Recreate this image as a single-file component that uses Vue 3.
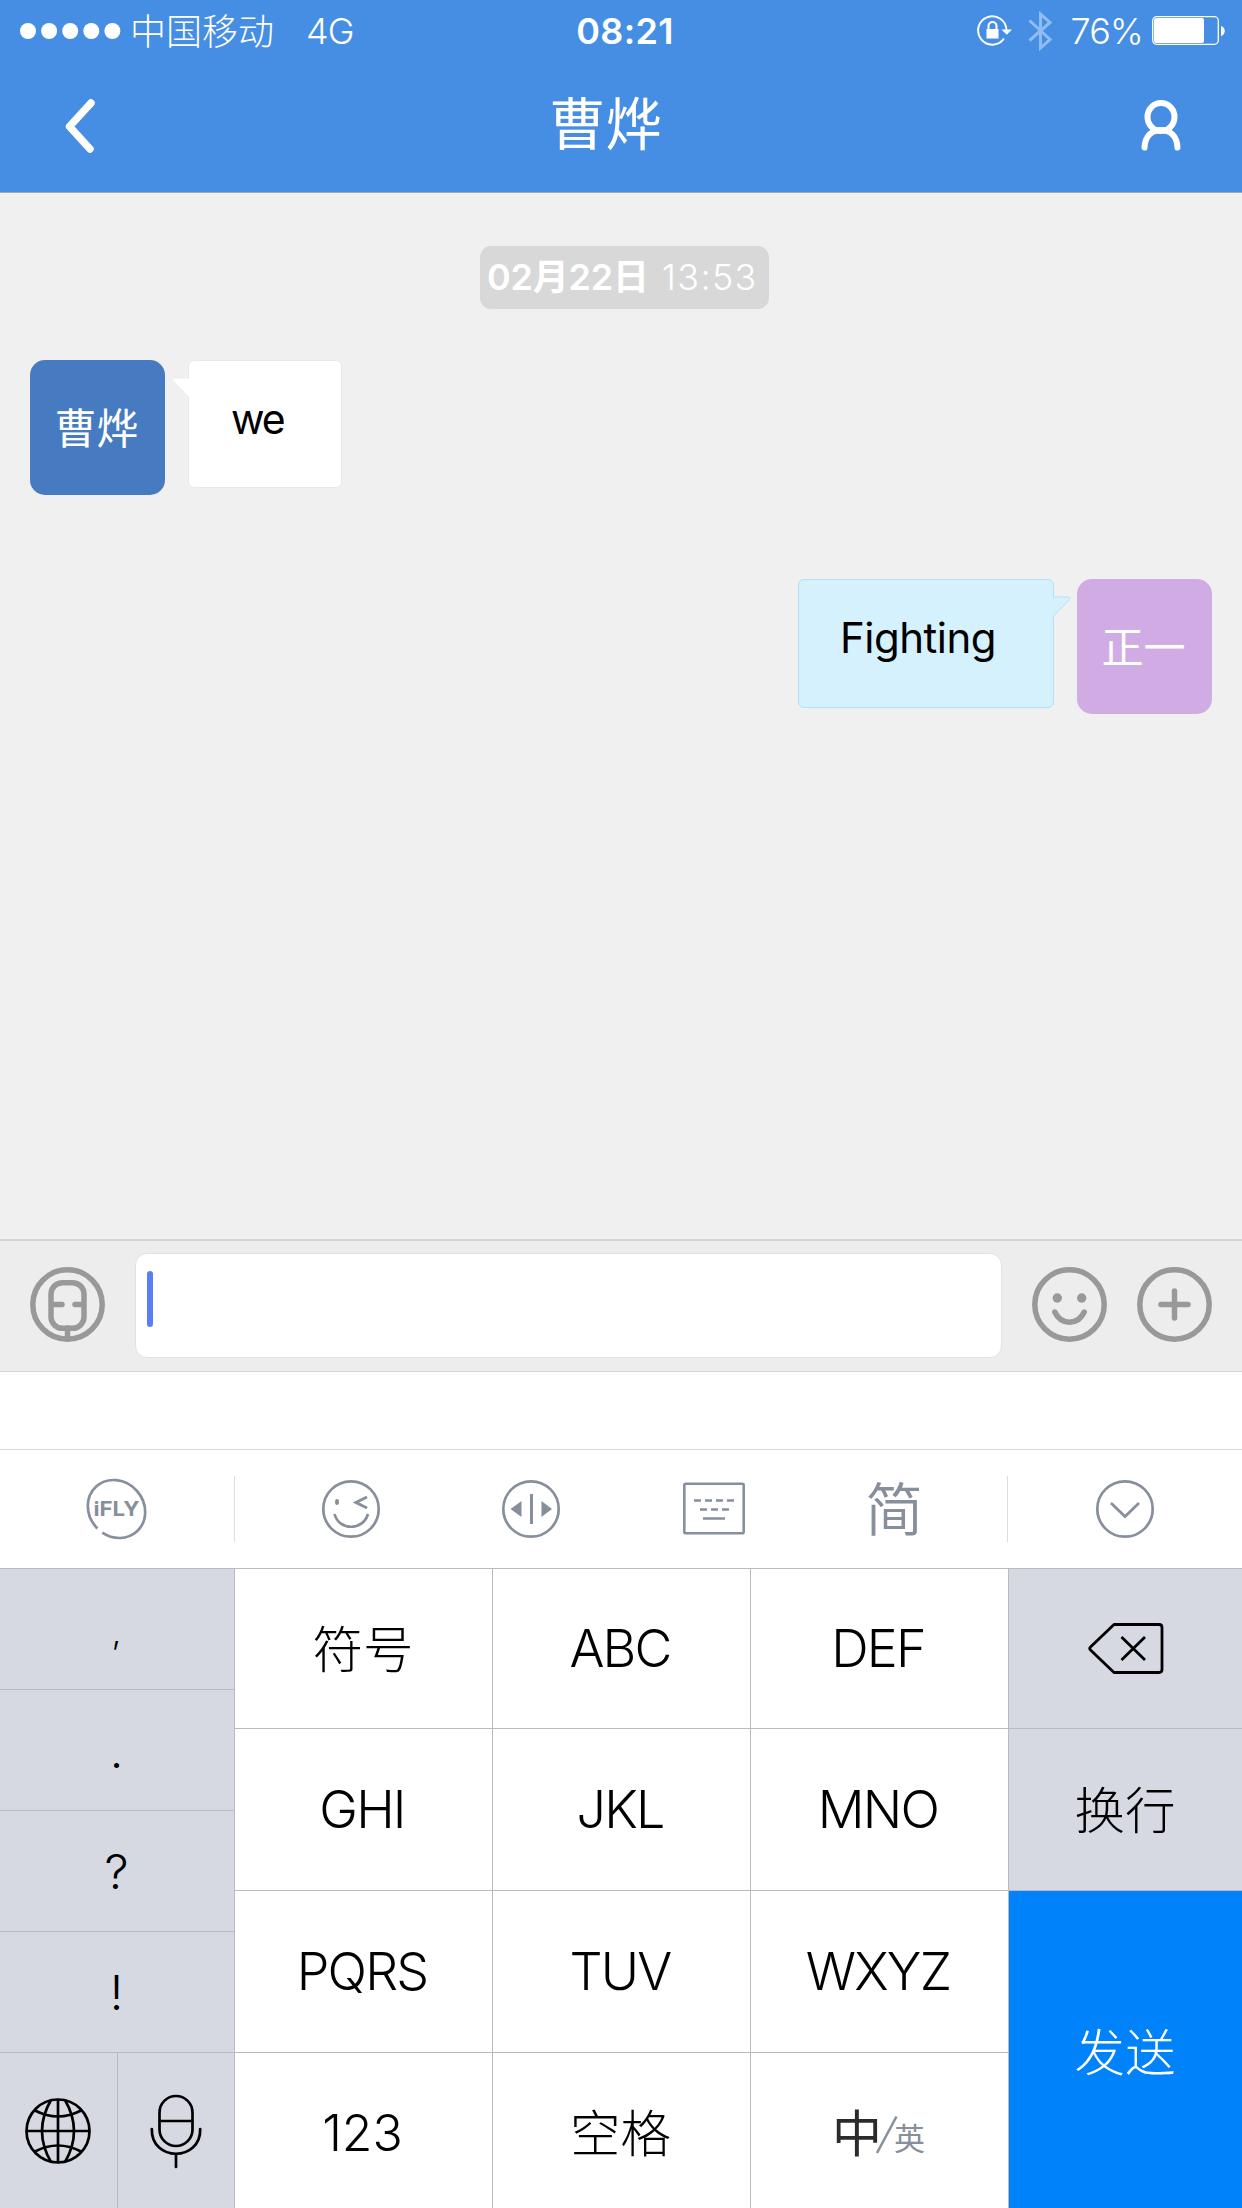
<script setup>
const punctuation = [',', '.', '?', '!']
const keys = ['符号', 'ABC', 'DEF', 'GHI', 'JKL', 'MNO', 'PQRS', 'TUV', 'WXYZ', '123', '空格']
const isLatin = (k) => /^[A-Z]+$/.test(k)
const isHan = (k) => /^[\u4e00-\u9fff]+$/.test(k)
</script>

<template>
  <div class="screen">
    <header class="top">
      <div class="status">
        <div class="carrier">
          <svg class="dots" width="101" height="16" viewBox="0 0 101 16" fill="#fff">
            <circle v-for="n in 5" :key="n" :cx="8 + (n - 1) * 21.1" cy="8" r="8" />
          </svg>
          <span class="operator">中国移动</span>
          <span class="network">4G</span>
        </div>
        <span class="clock">08:21</span>
        <div class="indicators">
          <svg width="36" height="32" viewBox="0 0 36 32" fill="none" stroke="#fff" stroke-width="2">
            <path d="M27 23.500A14.200 14.200 0 1 1 29.500 15" />
            <path d="M24.500 14.500H35L29.800 19.800Z" fill="#fff" stroke="none" />
            <rect x="9.500" y="14" width="12" height="9.500" fill="#fff" stroke="none" />
            <path d="M11.500 15v-4a4 4 0 0 1 8 0V15" />
          </svg>
          <svg class="bluetooth" width="24" height="42" viewBox="0 0 24 42" fill="none" stroke="#8fbdf1" stroke-width="3">
            <path d="M1.500 10.500L22 29.500L12.500 38V4L22 12.500L1.500 30.500" />
          </svg>
          <span class="percent">76%</span>
          <svg class="battery" width="74" height="30" viewBox="0 0 74 30">
            <rect x="0.700" y="0.700" width="65.600" height="27.600" rx="4" fill="none" stroke="#fff" stroke-width="1.300" />
            <rect x="2" y="2" width="50" height="25" rx="2" fill="#fff" />
            <path d="M69 10c5 1.500 5 8.500 0 10z" fill="#fff" />
          </svg>
        </div>
      </div>
      <nav class="nav">
        <svg class="back" width="32" height="56" viewBox="0 0 32 56" fill="none" stroke="#fff" stroke-width="7.500" stroke-linecap="round" stroke-linejoin="round">
          <path d="M26 5L4.500 28.500L25 51" />
        </svg>
        <h1>曹烨</h1>
        <svg class="person" width="42" height="52" viewBox="0 0 42 52" fill="none" stroke="#fff" stroke-width="6" stroke-linecap="round">
          <ellipse cx="21" cy="17" rx="13.500" ry="14" />
          <path d="M4.500 47.500C5 36 12 30 21 30S37 36 37.500 47.500" />
        </svg>
      </nav>
    </header>

    <main class="chat">
      <div class="date"><b>02月22日</b><span>13:53</span></div>
      <div class="message incoming">
        <div class="avatar">曹烨</div>
        <div class="bubble">
          <svg class="tail" width="19" height="22" viewBox="0 0 19 22">
            <path d="M19 1H2.500Q0.500 1.500 1.500 3.500L18 20.500H19Z" fill="#fff" />
            <path d="M18 1H2.500Q0.500 1.500 1.500 3.500L18 20.500" fill="none" stroke="#e8e8e8" stroke-width="0.800" />
          </svg>
          we
        </div>
      </div>
      <div class="message outgoing">
        <div class="bubble">
          <svg class="tail" width="19" height="22" viewBox="0 0 19 22">
            <path d="M0 1H16.500Q18.500 1.500 17.500 3.500L1 20.500H0Z" fill="#d6f1fe" />
            <path d="M1 1H16.500Q18.500 1.500 17.500 3.500L1 20.500" fill="none" stroke="#b5dff7" />
          </svg>
          Fighting
        </div>
        <div class="avatar">正一</div>
      </div>
    </main>

    <section class="composer">
      <svg width="75" height="75" viewBox="0 0 75 75" fill="none" stroke="#999" stroke-width="5.500" stroke-linecap="round">
        <circle cx="37.500" cy="37.500" r="34.700" />
        <rect x="21" y="15.700" width="33" height="45.600" rx="11.500" />
        <path d="M22 37.500H32M53 37.500H45M37.500 61V71" />
      </svg>
      <div class="field"><i class="caret"></i></div>
      <svg width="75" height="75" viewBox="0 0 75 75" fill="none" stroke="#999" stroke-width="5.500">
        <circle cx="37.500" cy="37.500" r="34.700" />
        <circle cx="25.300" cy="31" r="4.700" fill="#999" stroke="none" />
        <circle cx="49.700" cy="31" r="4.700" fill="#999" stroke="none" />
        <path d="M22.800 45C29 58.500 46 58.500 52.200 45" stroke-linecap="round" />
      </svg>
      <svg class="plus" width="75" height="75" viewBox="0 0 75 75" fill="none" stroke="#999" stroke-width="5.500" stroke-linecap="round">
        <circle cx="37.500" cy="37.500" r="34.700" />
        <path d="M37.500 24V51M24 37.500H51" />
      </svg>
    </section>

    <div class="candidates"></div>

    <section class="toolbar">
      <div class="tool side">
        <svg width="62" height="62" viewBox="0 0 62 62" fill="none" stroke="#868f9b" stroke-width="2.700">
          <ellipse cx="30.500" cy="31" rx="27.300" ry="30.300" transform="rotate(-42 30.500 31)" pathLength="100" stroke-dasharray="45.500 3.500 51 0" />
          <text x="7.500" y="38.300" textLength="46" lengthAdjust="spacingAndGlyphs" class="ifly">iFLY</text>
        </svg>
      </div>
      <div class="tools">
        <svg width="60" height="60" viewBox="0 0 60 60" fill="none" stroke="#868f9b" stroke-width="2.700">
          <circle cx="30" cy="30" r="27.700" />
          <ellipse cx="16" cy="23" rx="2" ry="3" fill="#868f9b" stroke="none" />
          <path d="M46 18L35 23.500L46 29" stroke-width="3" />
          <path d="M13.500 35C18 52 42 52 47 35" />
        </svg>
        <svg width="60" height="60" viewBox="0 0 60 60" fill="none" stroke="#868f9b" stroke-width="2.700">
          <circle cx="30" cy="30" r="27.700" />
          <path d="M30.500 15V45" stroke-width="3" />
          <path d="M20.500 22V38L9.500 30ZM40.500 22V38L51 30Z" fill="#868f9b" stroke="none" />
        </svg>
        <svg class="board" width="62" height="54" viewBox="0 0 62 54" fill="none" stroke="#868f9b" stroke-width="2.600">
          <rect x="1.300" y="1.800" width="59.400" height="49.400" rx="1.500" />
          <path d="M11 18.500H18M22 18.500H29M33 18.500H40M44 18.500H51M17 27.500H24M28 27.500H35M39 27.500H46M20 36.500H42" />
        </svg>
        <span class="simplified">简</span>
      </div>
      <div class="tool side">
        <svg width="60" height="60" viewBox="0 0 60 60" fill="none" stroke="#868f9b" stroke-width="2.700">
          <circle cx="30" cy="30" r="27.700" />
          <path d="M16 24L30 37.500L44 24" />
        </svg>
      </div>
    </section>

    <section class="keyboard">
      <div class="left">
        <div v-for="p in punctuation" :key="p" class="key punct" :class="{ comma: p === ',' }">{{ p }}</div>
        <div class="pair">
          <div class="key globe">
            <svg width="68" height="68" viewBox="0 0 68 68" fill="none" stroke="#000" stroke-width="2.700">
              <circle cx="34" cy="34" r="31.500" />
              <path d="M34 2.500V65.500M2.500 34H65.500" />
              <path d="M27 3Q9 34 27 65M41 3Q59 34 41 65M11 13.500Q34 25.500 57 13.500M11 54.500Q34 42.500 57 54.500" />
            </svg>
          </div>
          <div class="key mic">
            <svg width="52" height="76" viewBox="0 0 52 76" fill="none" stroke="#000" stroke-width="2.700" stroke-linecap="round">
              <rect x="9.500" y="3" width="33" height="50" rx="16.500" />
              <path d="M10 28H42M1.800 36C1 69 51 69 50.200 36M26 61V74" />
            </svg>
          </div>
        </div>
      </div>
      <div class="middle">
        <div v-for="k in keys" :key="k" class="key" :class="{ latin: isLatin(k), han: isHan(k) }"><span>{{ k }}</span></div>
        <div class="key lang">
          <span class="zh">中</span>
          <svg width="22" height="40" viewBox="0 0 22 40" stroke="#868f9b" stroke-width="2.500"><path d="M1 38L20.500 1.500" /></svg>
          <span class="en">英</span>
        </div>
      </div>
      <div class="right">
        <div class="key">
          <svg width="76" height="52" viewBox="0 0 76 52" fill="none" stroke="#000" stroke-width="2.800" stroke-linejoin="round">
            <path d="M26 1.500H71Q74 1.500 74 4.500V46.500Q74 49.500 71 49.500H26L2.500 27Q1 25.500 2.500 24Z" />
            <path d="M33.500 14L57 37M57 14L33.500 37" />
          </svg>
        </div>
        <div class="key han"><span>换行</span></div>
        <div class="key han send"><span>发送</span></div>
      </div>
    </section>
  </div>
</template>

<style>
body { margin: 0; }
</style>

<style scoped>
.screen {
  width: 1242px;
  height: 2208px;
  display: flex;
  flex-direction: column;
  overflow: hidden;
  background: #f0f0f0;
  font-family: Inter, "Noto Sans CJK SC", sans-serif;
  color: #000;
}
.screen * { box-sizing: border-box; }
svg { display: block; flex: none; }

.top {
  height: 193px;
  background: #458ee4;
  border-bottom: 1px solid #a3a5aa;
  color: #fff;
}
.status {
  height: 62px;
  display: grid;
  grid-template-columns: 1fr auto 1fr;
  align-items: center;
  padding: 0 16px 0 20px;
  font-size: 36px;
  line-height: 62px;
}
.carrier { display: flex; align-items: center; }
.operator { margin-left: 9px; padding-top: 2px; line-height: 60px; font-weight: 300; white-space: nowrap; }
.network { margin-left: 32px; font-weight: 300; letter-spacing: -0.800px; }
.clock { font-weight: 600; letter-spacing: 0.300px; margin-left: 4px; }
.indicators { display: flex; align-items: center; justify-content: flex-end; }
.bluetooth { margin-left: 15px; }
.percent { margin-left: 18px; font-weight: 300; letter-spacing: -0.800px; }
.battery { margin-left: 9px; }
.nav {
  height: 130px;
  display: flex;
  align-items: center;
  justify-content: space-between;
  padding: 0 60px 2px 65px;
}
.nav h1 {
  margin: 0 26px 2px 0;
  font-size: 56.500px;
  line-height: 80px;
  font-weight: 400;
}

.chat { height: 1046px; padding: 53px 30px 0; }
.date {
  width: 289px;
  height: 63px;
  margin-left: 450px;
  padding: 0 0 1px 7px;
  display: flex;
  align-items: center;
  gap: 13px;
  border-radius: 11px;
  background: #d8d8d8;
  color: #fff;
  font-size: 36px;
  line-height: 60px;
  white-space: nowrap;
}
.date b { font-weight: 600; letter-spacing: -0.200px; }
.date span { font-weight: 300; letter-spacing: 1.300px; }
.message { display: flex; align-items: flex-start; }
.incoming { margin-top: 51px; }
.outgoing { margin-top: 84px; justify-content: flex-end; }
.avatar {
  width: 135px;
  height: 135px;
  padding-right: 2px;
  border-radius: 15px;
  background: #477bc1;
  color: #fff;
  font-size: 42px;
  line-height: 137px;
  text-align: center;
}
.outgoing .avatar { background: #d1ace4; }
.bubble {
  position: relative;
  height: 129px;
  border: 1px solid #e8e8e8;
  border-radius: 6px;
  background: #fff;
  font-size: 42px;
  line-height: 115px;
  white-space: nowrap;
}
.incoming .bubble { margin: 0 0 0 23px; width: 154px; height: 128px; padding-left: 42px; font-size: 41px; line-height: 117px; letter-spacing: -2px; }
.outgoing .bubble { margin-right: 23px; width: 256px; padding-left: 41px; letter-spacing: -0.500px; background: #d6f1fe; border-color: #b5dff7; }
.tail { position: absolute; top: 16px; }
.incoming .tail { left: -18px; }
.outgoing .tail { right: -18px; }

.composer {
  height: 133px;
  display: flex;
  align-items: center;
  padding: 0 30px 3px;
  background: #ededed;
  border-top: 2px solid #d4d4d4;
  border-bottom: 1px solid #d6d6d6;
}
.field {
  width: 867px;
  height: 105px;
  margin: 1px 30px 0;
  padding: 17px 11px;
  border: 1px solid #e2e2e2;
  border-radius: 12px;
  background: #fff;
}
.caret { display: block; width: 6px; height: 56px; border-radius: 3px; background: #5c7ef5; }
.plus { margin-left: 30px; }

.candidates { height: 78px; background: #fff; border-bottom: 1px solid #dadada; }
.toolbar { height: 119px; display: flex; align-items: center; background: #fff; border-bottom: 1px solid #b9bbbf; }
.tool { display: flex; align-items: center; justify-content: center; height: 66px; }
.side { width: 234px; }
.tools {
  width: 775px;
  height: 66px;
  display: flex;
  align-items: center;
  justify-content: space-between;
  padding: 0 84px 0 86px;
  border-left: 1px solid #dcdcdc;
  border-right: 1px solid #dcdcdc;
}
.simplified { font-size: 58px; line-height: 66px; padding-top: 2px; font-weight: 350; color: #868f9b; }
.board { margin-left: 2px; }
.ifly { font: 700 20px Inter, sans-serif; fill: #868f9b; stroke: none; }

.keyboard { flex: 1; display: flex; font-size: 50px; font-weight: 300; }
.key { display: flex; align-items: center; justify-content: center; }
.left { width: 235px; background: #d6d9e1; border-right: 1px solid #b9bbbf; }
.punct { height: 121px; padding-right: 1px; border-bottom: 1px solid #b9bbbf; font-size: 48px; }
.comma { font-size: 34px; padding-top: 5px; }
.pair { display: flex; height: 155px; }
.globe { width: 118px; padding: 0 2px 0 0; border-right: 1px solid #b9bbbf; }
.mic { flex: 1; }
.middle {
  width: 774px;
  display: grid;
  grid-template-columns: repeat(3, 258px);
  grid-template-rows: 160px 162px 162px 155px;
  background: #fff;
}
.middle .key { border-right: 1px solid #b9bbbf; border-bottom: 1px solid #b9bbbf; }
.middle .key:nth-child(n + 10) { border-bottom: 0; padding: 5px 2px 0 0; }
.latin { font-size: 52px; letter-spacing: -1.800px; padding-right: 3px; }
.key.han { padding-right: 1px; font-size: 50.500px; }
.han span { margin-bottom: 6px; }
.lang .zh { font-size: 50px; font-weight: 400; color: #2b2b2b; margin-bottom: 7px; }
.lang svg { margin-left: -6px; margin-top: 3px; }
.lang .en { font-size: 31px; font-weight: 400; color: #868f9b; margin: 6px 0 0 -4px; }
.right { flex: 1; display: flex; flex-direction: column; background: #d6d9e1; }
.right .key { height: 160px; border-bottom: 1px solid #b9bbbf; }
.right .key:nth-child(2) { height: 162px; }
.right .send { height: 317px; border: 0; background: #0083fa; color: #fff; }
.send span { margin-bottom: 2px; }
</style>
